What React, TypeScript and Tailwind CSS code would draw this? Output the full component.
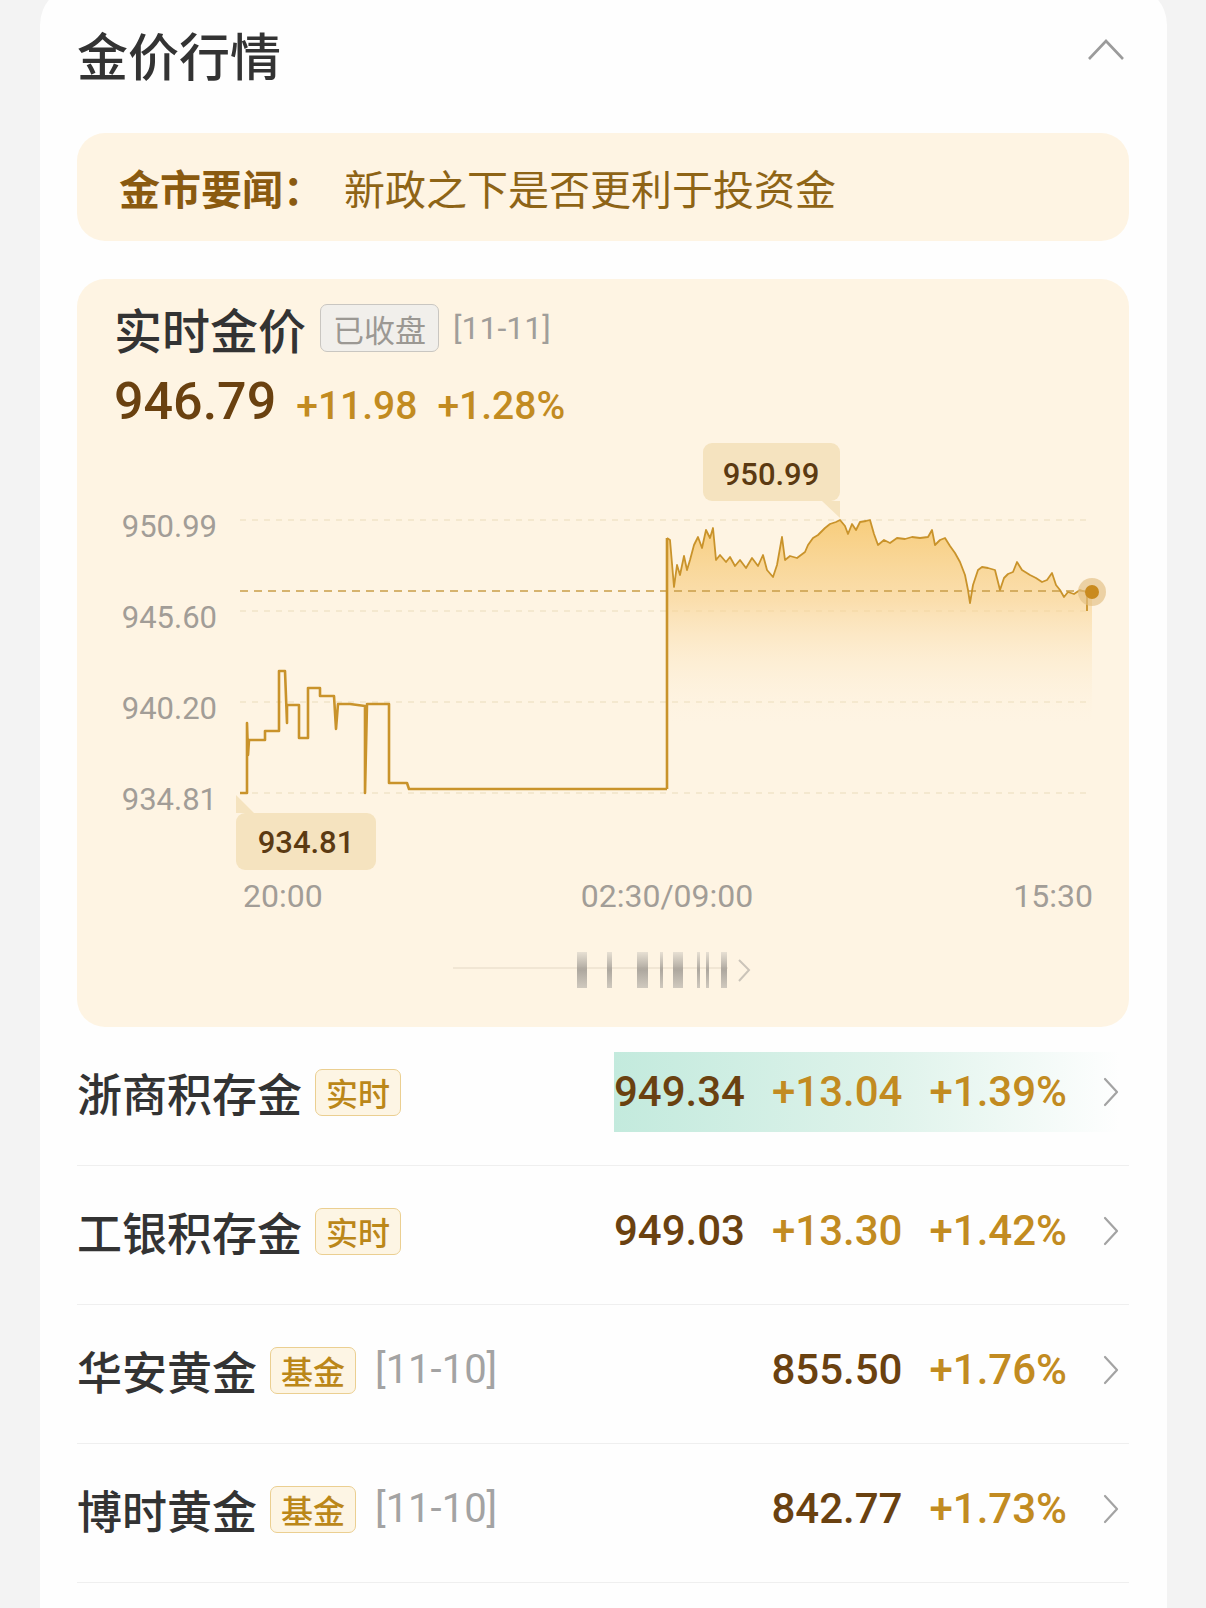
import React from "react";

const cjk = { fontFamily: '"Noto Sans CJK SC", "Noto Sans", sans-serif' };
const num = { fontFamily: 'Roboto, "Noto Sans CJK SC", sans-serif' };

const rows = [
  { name: "浙商积存金", tag: "实时", price: "949.34", change: "+13.04", pct: "+1.39%", flash: true },
  { name: "工银积存金", tag: "实时", price: "949.03", change: "+13.30", pct: "+1.42%" },
  { name: "华安黄金", tag: "基金", date: "[11-10]", price: "855.50", pct: "+1.76%" },
  { name: "博时黄金", tag: "基金", date: "[11-10]", price: "842.77", pct: "+1.73%" }
];

const leftLine =
  "M240,793 H247 V723 L248,755 L249,740 H265 V731 H279 V671 H285 L287,723 V705 H299 V738 H308 V688 H320 V696 H334 L336,729 L338,704 H350 L365,706 V793 L367,704 H389 V783 H407 L409,789 H667";

const rightPts =
  "667,538 670,540 674,587 677,565 680,575 684,556 687,570 690,560 694,545 698,537 702,548 706,530 710,538 713,528 716,560 720,555 726,562 730,557 735,566 740,560 746,568 752,558 758,566 763,555 767,570 773,577 777,565 782,537 785,560 790,556 797,558 805,552 808,545 813,538 818,535 825,528 830,524 836,522 840,520 845,526 848,534 852,524 856,530 860,522 866,521 870,520 874,534 878,545 884,540 890,543 897,538 905,539 912,537 920,538 928,537 932,530 935,545 940,540 945,538 950,546 955,553 960,562 965,575 968,590 970,603 973,585 978,570 982,567 988,568 995,570 1000,590 1004,578 1008,574 1013,572 1017,562 1022,570 1030,575 1036,578 1042,582 1047,580 1052,573 1056,585 1060,590 1064,597 1068,592 1074,594 1080,590 1086,592 1092,592";

function Chart() {
  const grid = [520, 611, 702, 793];
  const labels = ["950.99", "945.60", "940.20", "934.81"];
  return (
    <svg width="1052" height="492" viewBox="0 0 1052 492" className="block" style={num}>
      <defs>
        <linearGradient id="area" x1="0" y1="520" x2="0" y2="725" gradientUnits="userSpaceOnUse">
          <stop offset="0" stopColor="#f6c66a" stopOpacity="0.85" />
          <stop offset="0.4" stopColor="#f8d08a" stopOpacity="0.6" />
          <stop offset="1" stopColor="#fdf1dc" stopOpacity="0" />
        </linearGradient>
      </defs>
      <g transform="translate(-77,-432)">
        {grid.map((y, i) => (
          <g key={y}>
            <line x1="240" x2="1092" y1={y} y2={y} stroke="#f1e3c9" strokeWidth="1.5" strokeDasharray="6 6" />
            <text x="217" y={y + 17} textAnchor="end" fontSize="31" fill="#a29d97">
              {labels[i]}
            </text>
          </g>
        ))}
        <polygon points={`${rightPts} 1092,725 667,725`} fill="url(#area)" />
        <line x1="240" x2="1092" y1="591" y2="591" stroke="#c99d48" strokeWidth="1.6" strokeDasharray="8 6" />
        <path d={leftLine} fill="none" stroke="#c9932b" strokeWidth="2.6" strokeLinejoin="round" />
        <line x1="667" x2="667" y1="789" y2="538" stroke="#c9932b" strokeWidth="2.6" />
        <polyline points={rightPts} fill="none" stroke="#c9932b" strokeWidth="1.8" strokeLinejoin="round" />
        <line x1="1087" x2="1087" y1="594" y2="611" stroke="#c9932b" strokeWidth="1.8" />
        <circle cx="1092" cy="592" r="14" fill="#e2bf82" fillOpacity="0.65" />
        <circle cx="1092" cy="592" r="7" fill="#c98a1e" />

        <rect x="703" y="443" width="137" height="58" rx="9" fill="#f5e3bf" />
        <polygon points="822,501 840,501 840,518" fill="#f5e3bf" />
        <text x="771" y="485" textAnchor="middle" fontSize="31" fontWeight="500" fill="#5b3a12">
          950.99
        </text>

        <rect x="236" y="813" width="140" height="57" rx="9" fill="#f5e3bf" />
        <polygon points="236,795 236,813 254,813" fill="#f5e3bf" />
        <text x="306" y="853" textAnchor="middle" fontSize="31" fontWeight="500" fill="#5b3a12">
          934.81
        </text>

        <text x="243" y="907" fontSize="32" fill="#a29d97">20:00</text>
        <text x="667" y="907" textAnchor="middle" fontSize="32" fill="#a29d97">02:30/09:00</text>
        <text x="1093" y="907" textAnchor="end" fontSize="32" fill="#a29d97">15:30</text>
      </g>
    </svg>
  );
}

function Indicator() {
  const bars = [
    [577, 10], [607, 5], [637, 11], [660, 3], [673, 10], [697, 3], [706, 3], [721, 6]
  ];
  return (
    <svg width="300" height="40" viewBox="0 0 300 40" className="block">
      <defs>
        <linearGradient id="bar" x1="0" y1="0" x2="0" y2="1">
          <stop offset="0" stopColor="#e2dbcf" />
          <stop offset="0.5" stopColor="#9a958e" />
          <stop offset="1" stopColor="#c4beb5" />
        </linearGradient>
      </defs>
      <g transform="translate(-453,-950)">
        <line x1="453" x2="728" y1="968" y2="968" stroke="#f1e6d4" strokeWidth="2" />
        {bars.map(([x, w]) => (
          <rect key={x} x={x} y="952" width={w} height="36" fill="url(#bar)" opacity="0.8" />
        ))}
        <path d="M739 960 L749 970 L739 981" fill="none" stroke="#cbc4b9" strokeWidth="2" />
      </g>
    </svg>
  );
}

function ChevronRight() {
  return (
    <svg width="18" height="32" viewBox="0 0 18 32" className="block">
      <path d="M3 3 L15 16 L3 29" fill="none" stroke="#a3a3a3" strokeWidth="2.2" strokeLinecap="round" strokeLinejoin="round" />
    </svg>
  );
}

export default function App() {
  return (
    <div className="h-[1608px] overflow-hidden bg-[#f3f3f3] pl-[40px] pr-[39px]" style={cjk}>
      <div className="-mt-[15px] rounded-t-[40px] bg-[#fefefe] pt-[15px] pb-[80px] pl-[37px] pr-[38px]">
        <div className="flex h-[108px] items-center justify-between">
          <h1 className="text-[51px] font-medium leading-none text-[#333]">金价行情</h1>
          <svg width="38" height="24" viewBox="0 0 38 24" className="mr-[4px] mb-[10px] block">
            <path d="M2 22 L19 4 L36 22" fill="none" stroke="#9b9b9b" strokeWidth="2.6" />
          </svg>
        </div>

        <div className="mt-[25px] flex h-[108px] items-center rounded-[28px] bg-[#fef4e3] pl-[42px] text-[41px] leading-none">
          <span className="font-bold text-[#8a5a10]">金市要闻：</span>
          <span className="ml-[20px] text-[#8e6416]">新政之下是否更利于投资金</span>
        </div>

        <div className="mt-[38px] h-[748px] overflow-hidden rounded-[28px] bg-[#fef4e3] pt-[22px]">
          <div className="flex h-[54px] items-center pl-[37px]">
            <span className="text-[48px] font-medium leading-none text-[#333]">实时金价</span>
            <span className="ml-[14px] flex h-[48px] items-center rounded-[7px] border-[1.5px] border-[#c9c6c1] bg-[#f1efeb] px-[12px] text-[31px] leading-none text-[#9b9893]">
              已收盘
            </span>
            <span className="ml-[14px] text-[32px] leading-none text-[#a19e9a]" style={num}>
              [11-11]
            </span>
          </div>
          <div className="mt-[17px] flex h-[60px] items-baseline pl-[37px]" style={num}>
            <span className="text-[52px] font-medium leading-[60px] text-[#6a4110]">946.79</span>
            <span className="ml-[20px] text-[39px] font-medium leading-none text-[#c28b21]">+11.98</span>
            <span className="ml-[20px] text-[39px] font-medium leading-none text-[#c28b21]">+1.28%</span>
          </div>
          <Chart />
          <div className="mt-[26px] flex justify-center">
            <Indicator />
          </div>
        </div>

        <div>
          {rows.map((r) => (
            <div key={r.name} className="flex h-[139px] items-center justify-between border-b border-[#efefef] pb-[8px] pr-[9px]">
              <div className="flex items-center">
                <span className="text-[45px] font-medium leading-none text-[#333]">{r.name}</span>
                <span className="ml-[13px] flex h-[47px] items-center rounded-[7px] border border-[#ebcf91] bg-[#fdf5e4] px-[10px] text-[32px] font-medium leading-none text-[#bb8719]">
                  {r.tag}
                </span>
                {r.date && (
                  <span className="ml-[19px] text-[40px] leading-none text-[#a3a3a3]" style={num}>
                    {r.date}
                  </span>
                )}
              </div>
              <div
                className={
                  r.flash
                    ? "flex h-[80px] items-center bg-[linear-gradient(90deg,#c3eadd_0%,#dff3eb_55%,rgba(255,255,255,0)_100%)]"
                    : "flex h-[80px] items-center"
                }
              >
                <div className="flex items-center gap-[27px] text-[42px] font-medium leading-none" style={num}>
                  <span className="text-[#6a4110]">{r.price}</span>
                  {r.change && <span className="text-[#c28b21]">{r.change}</span>}
                  <span className="text-[#c28b21]">{r.pct}</span>
                </div>
                <div className="ml-[35px]">
                  <ChevronRight />
                </div>
              </div>
            </div>
          ))}
        </div>
      </div>
    </div>
  );
}
